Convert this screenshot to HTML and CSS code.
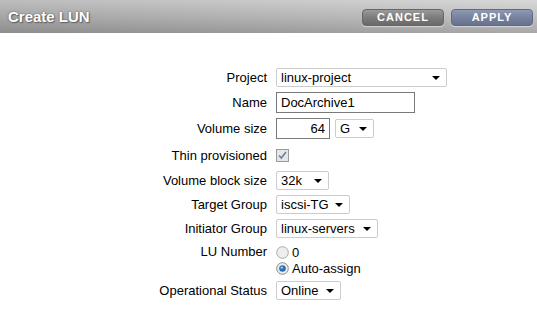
FILE: index.html
```html
<!DOCTYPE html>
<html lang="en">
<head>
  <meta charset="UTF-8">
  <meta name="viewport" content="width=device-width, initial-scale=1.0">
  <title>Create LUN</title>
  <link rel="stylesheet" href="styles.css">
</head>
<body>

  <!-- Header bar -->
  <div class="header">
    <div class="title">Create LUN</div>
    <div class="actions">
      <button class="btn btn-cancel">CANCEL</button>
      <button class="btn btn-apply">APPLY</button>
    </div>
  </div>

  <!-- Form -->
  <div class="form">
    <label class="label">Project</label>
    <div class="field">
      <div class="select w-project">linux-project <span class="arrow"></span></div>
    </div>

    <label class="label">Name</label>
    <div class="field">
      <div class="input w-name">DocArchive1</div>
    </div>

    <label class="label">Volume size</label>
    <div class="field">
      <div class="input w-size num">64</div>
      <div class="select w-unit">G <span class="arrow"></span></div>
    </div>

    <label class="label">Thin provisioned</label>
    <div class="field">
      <span class="checkbox">
        <svg width="13" height="13" viewBox="0 0 13 13">
          <rect x="0.5" y="0.5" width="12" height="12" fill="#e6e6e6" stroke="#9a9a9a"/>
          <path d="M3 6.5 L5.3 9 L10 3" fill="none" stroke="#6e7fa6" stroke-width="1.6"/>
        </svg>
      </span>
    </div>

    <label class="label">Volume block size</label>
    <div class="field">
      <div class="select w-block">32k <span class="arrow"></span></div>
    </div>

    <label class="label">Target Group</label>
    <div class="field">
      <div class="select w-target">iscsi-TG <span class="arrow"></span></div>
    </div>

    <label class="label">Initiator Group</label>
    <div class="field">
      <div class="select w-init">linux-servers <span class="arrow"></span></div>
    </div>

    <label class="label label-top">LU Number</label>
    <div class="field radios">
      <div class="radio-row">
        <svg class="radio" width="13" height="13" viewBox="0 0 13 13">
          <circle cx="6.5" cy="6.5" r="5.8" fill="#eeeeee" stroke="#a8a8a8"/>
        </svg>
        <span>0</span>
      </div>
      <div class="radio-row">
        <svg class="radio" width="13" height="13" viewBox="0 0 13 13">
          <circle cx="6.5" cy="6.5" r="5.8" fill="#eeeeee" stroke="#8a8a8a"/>
          <circle cx="6.5" cy="6.5" r="3.3" fill="#2b6fb0"/>
          <circle cx="5.8" cy="5.6" r="1.2" fill="#9fd0f5"/>
        </svg>
        <span>Auto-assign</span>
      </div>
    </div>

    <label class="label">Operational Status</label>
    <div class="field">
      <div class="select w-status">Online <span class="arrow"></span></div>
    </div>
  </div>

</body>
</html>
```

FILE: styles.css
```css
/* Basic reset */
* {
  margin: 0;
  padding: 0;
  box-sizing: border-box;
  font-family: "Liberation Sans", Arial, sans-serif;
}

body {
  width: 537px;
  height: 312px;
  background-color: #ffffff;
  color: #000000;
  font-size: 13px;
  overflow: hidden;
}

/* Header bar */
.header {
  height: 33px;
  display: flex;
  align-items: center;
  justify-content: space-between;
  padding: 0 4px 0 8px;
  background:
    linear-gradient(to right, rgba(0, 0, 0, 0.1), rgba(255, 255, 255, 0.12)),
    linear-gradient(#d2d2d2, #b4b4b4 60%, #9c9c9c);
}

.title {
  color: #ffffff;
  font-size: 15px;
  font-weight: bold;
  text-shadow: 0 0 2px #555555, 1px 1px 1px #666666;
  margin-top: -1px;
}

.actions {
  display: flex;
  gap: 7px;
  margin-top: 1px;
}

.btn {
  width: 82px;
  height: 17px;
  border: 1px solid #777777;
  border-radius: 4px;
  color: #ffffff;
  font-size: 11px;
  font-weight: bold;
  letter-spacing: 1px;
  cursor: pointer;
  box-shadow: 0 1px 1px rgba(255, 255, 255, 0.5);
}

.btn-cancel {
  background: linear-gradient(#9a9a9a, #7c7c7c 50%, #6a6a6a);
  border-color: #666666;
}

.btn-apply {
  background: linear-gradient(#8f9bb4, #76829e 50%, #67728e);
  border-color: #5f6884;
}

/* Form grid */
.form {
  display: grid;
  grid-template-columns: 267px auto;
  column-gap: 9px;
  row-gap: 5px;
  padding-top: 35px;
  align-items: center;
}

.label {
  text-align: right;
  white-space: nowrap;
}

.label-top {
  align-self: start;
  margin-top: 1px;
}

.field {
  display: flex;
  align-items: center;
  gap: 5px;
  min-height: 19px;
}

.select {
  height: 19px;
  display: flex;
  align-items: center;
  justify-content: space-between;
  padding: 0 6px 0 4px;
  border: 1px solid #cccccc;
  border-radius: 2px;
  background-color: #ffffff;
}

.arrow {
  width: 0;
  height: 0;
  border-left: 4px solid transparent;
  border-right: 4px solid transparent;
  border-top: 4px solid #000000;
}

.input {
  height: 21px;
  display: flex;
  align-items: center;
  padding: 0 4px;
  border: 1px solid #7a7a7a;
  background-color: #ffffff;
}

.num {
  justify-content: flex-end;
}

.w-project { width: 171px; }
.w-name { width: 139px; }
.w-size { width: 54px; }
.w-unit { width: 39px; }
.w-block { width: 53px; }
.w-target { width: 74px; }
.w-init { width: 102px; }
.w-status { width: 65px; }

.checkbox {
  display: flex;
  height: 22px;
  align-items: center;
}

.radios {
  flex-direction: column;
  align-items: flex-start;
  gap: 0;
  padding-top: 1px;
}

.radio-row {
  display: flex;
  align-items: center;
  gap: 3px;
  height: 16px;
}
```
